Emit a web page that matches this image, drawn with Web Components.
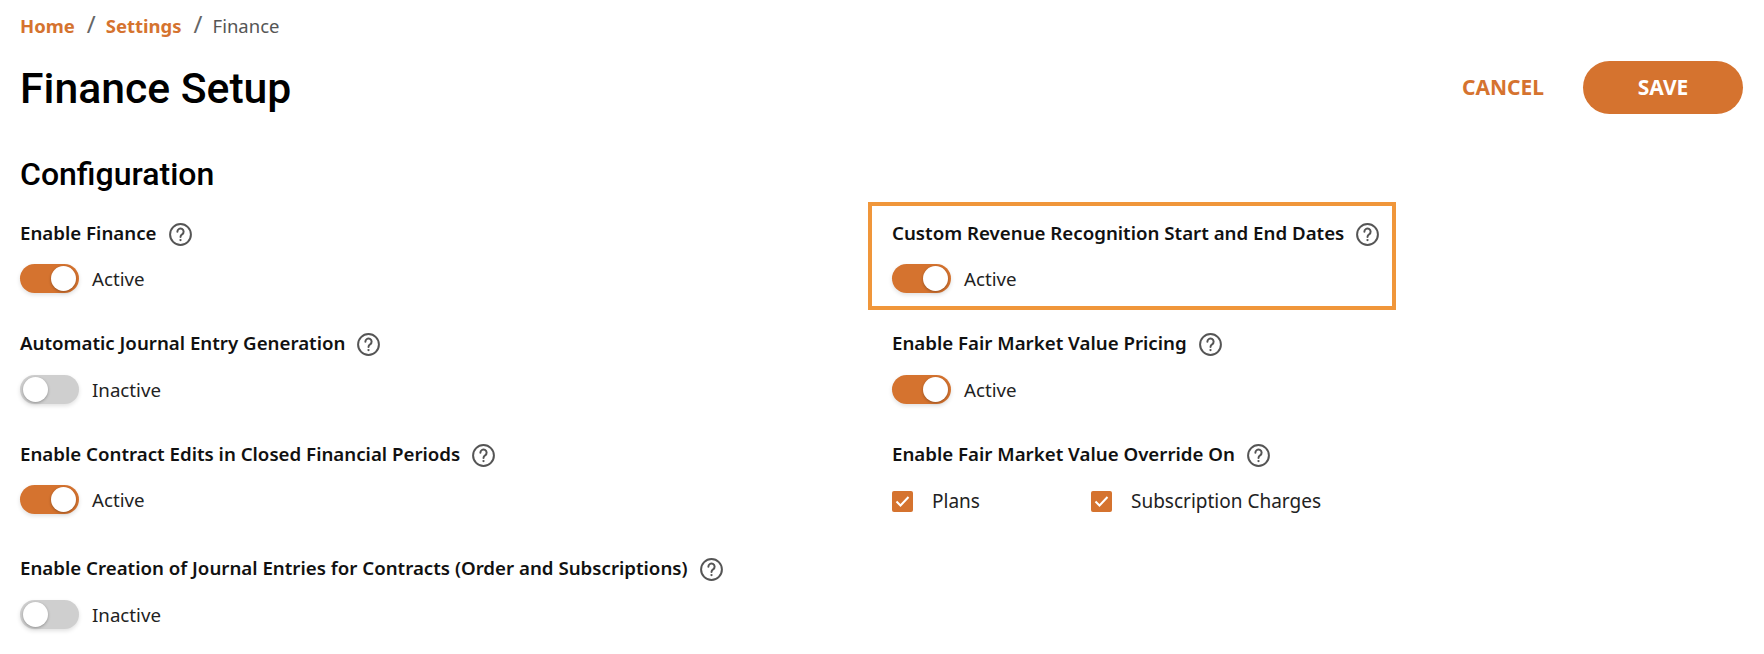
<!DOCTYPE html>
<html>
<head>
<meta charset="utf-8">
<title>Finance Setup</title>
<style>
  html, body { margin: 0; background: #fff; }
  body { font-family: "Noto Sans", sans-serif; color: #1a1a1a; }
</style>
</head>
<body>
<fin-page>
  <fin-breadcrumb slot="crumbs">
    <a>Home</a><a>Settings</a><span>Finance</span>
  </fin-breadcrumb>
  <fin-header slot="header" title="Finance Setup"></fin-header>
  <fin-field label="Enable Finance"><fin-toggle on>Active</fin-toggle></fin-field>
  <fin-field label="Custom Revenue Recognition Start and End Dates" highlight><fin-toggle on>Active</fin-toggle></fin-field>
  <fin-field label="Automatic Journal Entry Generation"><fin-toggle>Inactive</fin-toggle></fin-field>
  <fin-field label="Enable Fair Market Value Pricing"><fin-toggle on>Active</fin-toggle></fin-field>
  <fin-field label="Enable Contract Edits in Closed Financial Periods"><fin-toggle on>Active</fin-toggle></fin-field>
  <fin-field label="Enable Fair Market Value Override On">
    <fin-checks><fin-check>Plans</fin-check><fin-check>Subscription Charges</fin-check></fin-checks>
  </fin-field>
  <fin-field label="Enable Creation of Journal Entries for Contracts (Order and Subscriptions)" class="last"><fin-toggle>Inactive</fin-toggle></fin-field>
</fin-page>
<script>
const ORANGE = '#d5732f';

class FinPage extends HTMLElement {
  constructor() {
    super();
    this.attachShadow({ mode: 'open' });
    this.shadowRoot.innerHTML = `
      <style>
        :host { display: block; padding: 13px 21px 0 20px; }
        h2 {
          margin: 40px 0 0;
          font: 500 32px/40px Roboto, sans-serif;
          color: #000;
        }
        .grid {
          display: grid;
          grid-template-columns: 872px 1fr;
          grid-auto-rows: 110.5px;
          margin-top: 26px;
        }
        ::slotted(.last) { margin-top: 4px; }
      </style>
      <slot name="crumbs"></slot>
      <slot name="header"></slot>
      <h2>Configuration</h2>
      <div class="grid"><slot></slot></div>
    `;
  }
}

class FinBreadcrumb extends HTMLElement {
  constructor() {
    super();
    this.attachShadow({ mode: 'open' });
    this.shadowRoot.innerHTML = `
      <style>
        :host { display: flex; align-items: center; height: 24px; font-size: 18.5px; color: #555; }
        ::slotted(a) { color: ${ORANGE}; font-weight: 700; }
        ::slotted(*:not(:last-child))::after {
          content: "/";
          display: inline-block;
          margin: 0 10px 0 12px;
          color: #666;
          font-weight: 400;
          font-size: 24px;
          line-height: 24px;
        }
      </style>
      <slot></slot>
    `;
  }
}

class FinHeader extends HTMLElement {
  constructor() {
    super();
    this.attachShadow({ mode: 'open' });
    this.shadowRoot.innerHTML = `
      <style>
        :host { display: flex; align-items: center; justify-content: space-between; height: 54px; margin-top: 23px; }
        h1 { margin: 2px 0 0; font: 500 42.7px/54px Roboto, sans-serif; color: #000; }
        .actions { display: flex; align-items: center; gap: 39px; }
        button { border: 0; background: none; font: 700 21px "Noto Sans", sans-serif; padding: 0; }
        .cancel { color: ${ORANGE}; }
        .save { width: 160px; height: 53px; border-radius: 27px; background: ${ORANGE}; color: #fff; }
      </style>
      <h1></h1>
      <div class="actions">
        <button class="cancel">CANCEL</button>
        <button class="save">SAVE</button>
      </div>
    `;
    this.shadowRoot.querySelector('h1').textContent = this.getAttribute('title');
  }
}

class FinField extends HTMLElement {
  constructor() {
    super();
    this.attachShadow({ mode: 'open' });
    this.shadowRoot.innerHTML = `
      <style>
        :host { display: block; }
        .box { width: fit-content; }
        :host([highlight]) .box {
          border: 4px solid #f0963a;
          margin: -18px 0 0 -24px;
          padding: 14px 12px 13px 20px;
        }
        .label {
          display: flex;
          align-items: center;
          gap: 11px;
          height: 24px;
          font-size: 18.7px;
          font-weight: 600;
          color: #111;
          white-space: nowrap;
        }
        svg { width: 25px; height: 25px; margin-top: 4px; flex: none; }
        .control { margin-top: 20px; }
      </style>
      <div class="box">
        <div class="label">
          <span></span>
          <svg viewBox="0 0 24 24" fill="none" stroke="#555" stroke-width="1.9" stroke-linecap="round">
            <circle cx="12" cy="12" r="10"/>
            <path d="M9 9.3a3 3 0 1 1 4.6 2.5c-1 .7-1.6 1.3-1.6 2.6"/>
            <circle cx="12" cy="17.3" r="1.1" fill="#555" stroke="none"/>
          </svg>
        </div>
        <div class="control"><slot></slot></div>
      </div>
    `;
    this.shadowRoot.querySelector('.label span').textContent = this.getAttribute('label');
  }
}

class FinToggle extends HTMLElement {
  constructor() {
    super();
    this.attachShadow({ mode: 'open' });
    this.shadowRoot.innerHTML = `
      <style>
        :host { display: flex; align-items: center; gap: 13px; height: 29px; font-size: 18.7px; color: #222; }
        .track {
          position: relative;
          width: 59px;
          height: 29px;
          border-radius: 15px;
          background: #cfcfcf;
          box-shadow: 0 2px 4px rgba(0,0,0,.12);
        }
        .knob {
          position: absolute;
          top: 2px;
          left: 3px;
          width: 25px;
          height: 25px;
          border-radius: 50%;
          background: #fff;
          box-shadow: 0 1px 3px rgba(0,0,0,.3);
        }
        :host([on]) .track { background: ${ORANGE}; }
        :host([on]) .knob { left: 31px; }
      </style>
      <span class="track"><span class="knob"></span></span>
      <slot></slot>
    `;
  }
}

class FinChecks extends HTMLElement {
  constructor() {
    super();
    this.attachShadow({ mode: 'open' });
    this.shadowRoot.innerHTML = `
      <style>
        :host { display: grid; grid-template-columns: 199px auto; width: fit-content; margin-top: 24px; }
      </style>
      <slot></slot>
    `;
  }
}

class FinCheck extends HTMLElement {
  constructor() {
    super();
    this.attachShadow({ mode: 'open' });
    this.shadowRoot.innerHTML = `
      <style>
        :host { display: flex; align-items: center; gap: 19px; height: 24px; font-size: 19px; color: #222; }
        svg { width: 21px; height: 21px; flex: none; }
      </style>
      <svg viewBox="0 0 21 21">
        <rect width="21" height="21" rx="2" fill="${ORANGE}"/>
        <path d="M4.5 10.5l4 4 8-8.5" fill="none" stroke="#fff" stroke-width="2"/>
      </svg>
      <slot></slot>
    `;
  }
}

customElements.define('fin-page', FinPage);
customElements.define('fin-breadcrumb', FinBreadcrumb);
customElements.define('fin-header', FinHeader);
customElements.define('fin-field', FinField);
customElements.define('fin-toggle', FinToggle);
customElements.define('fin-checks', FinChecks);
customElements.define('fin-check', FinCheck);
</script>
</body>
</html>
